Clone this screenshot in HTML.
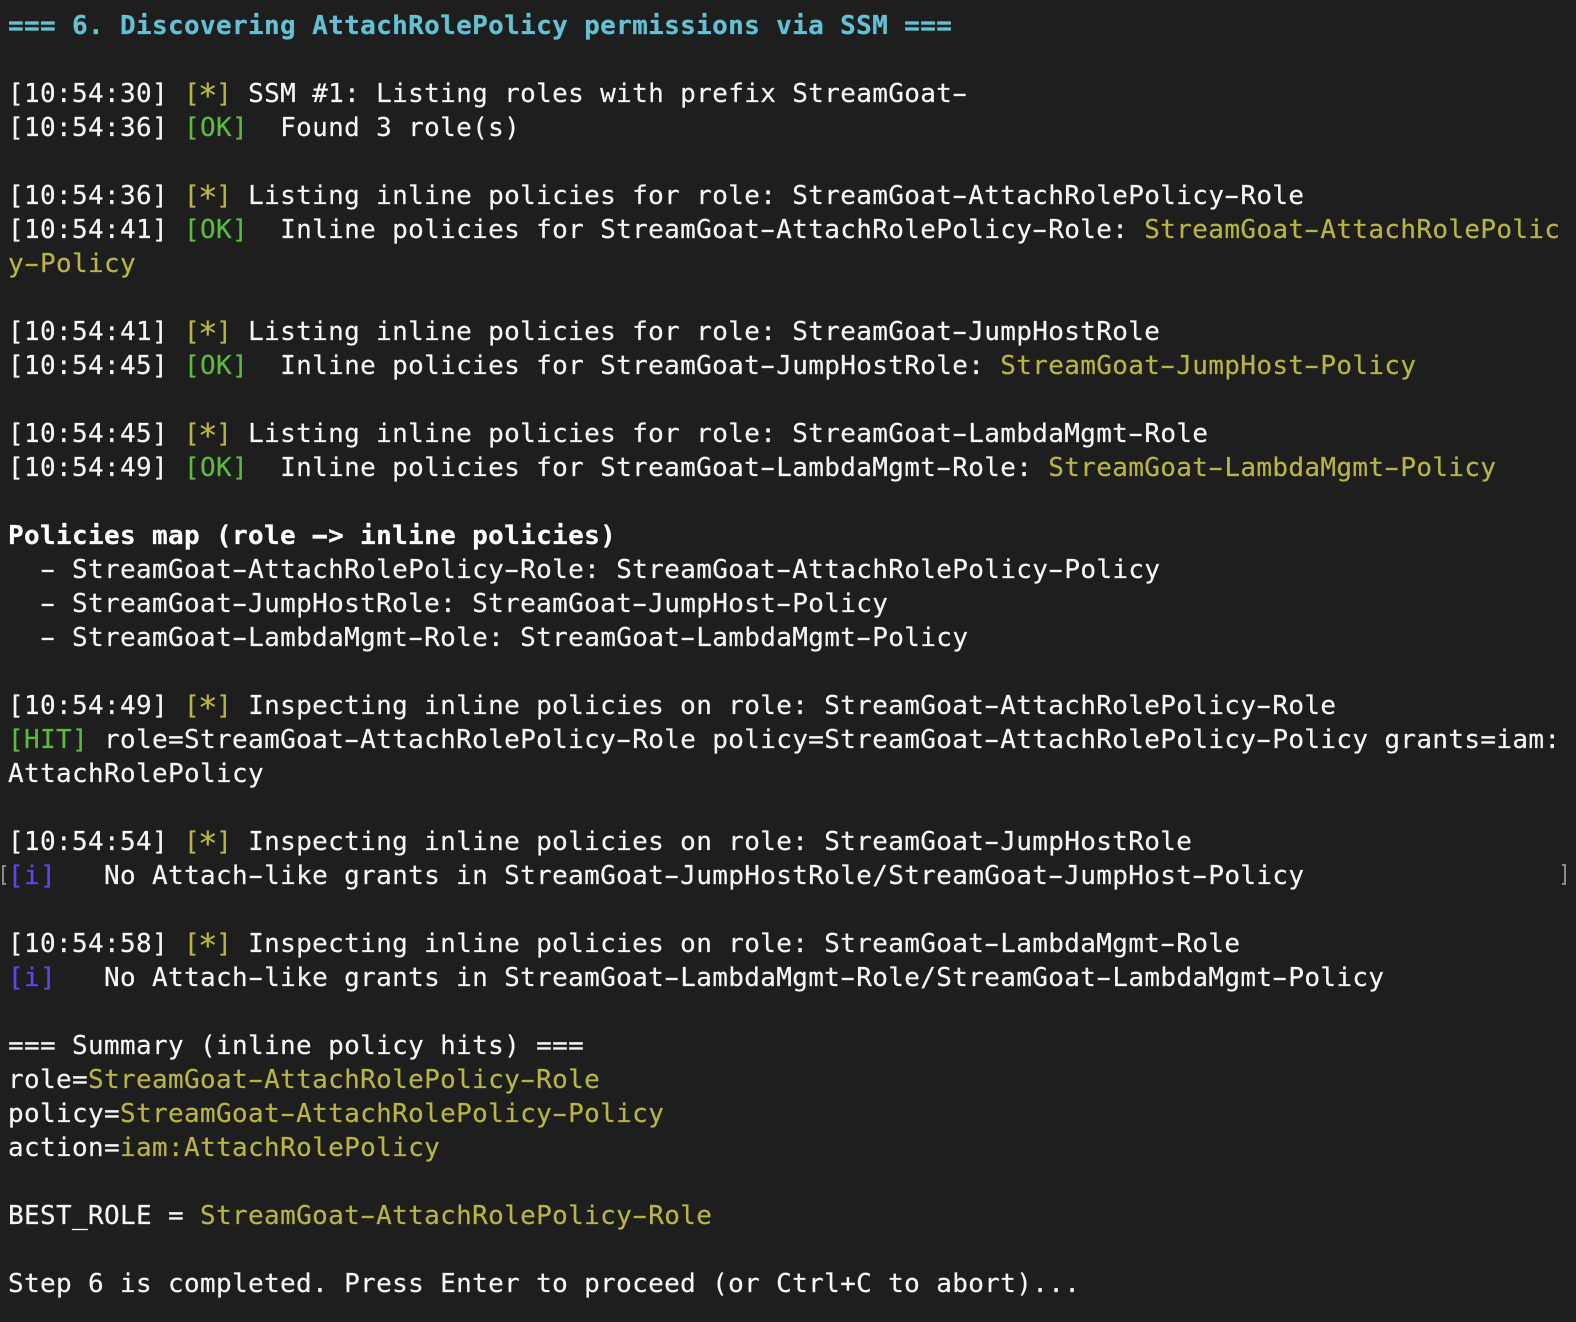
<!DOCTYPE html>
<html>
<head>
<meta charset="utf-8">
<style>
html,body{margin:0;padding:0;background:#1e1e1e;}
body{width:1576px;height:1322px;overflow:hidden;position:relative;}
pre{position:absolute;left:8px;top:9px;margin:0;font-family:"DejaVu Sans Mono","Liberation Mono",monospace;font-size:26px;line-height:34px;letter-spacing:0.35px;color:#f6f6f6;white-space:pre;-webkit-text-stroke:0.2px currentColor;}
.c{color:#64c1d4;font-weight:bold}
.y{color:#b8b545}
.g{color:#5cbb3e}
.b{color:#5c48ea}
.w{color:#fff;font-weight:bold}
i{font-style:normal;display:inline-block;transform:scaleX(1.75);}
b{font-weight:normal;display:inline-block;transform:translateY(3px) scale(1.25);}
.br{position:absolute;width:2px;background:#8a8a8a;}
.br:before,.br:after{content:"";position:absolute;width:4px;height:2px;background:#8a8a8a;}
.br:before{top:0}.br:after{bottom:0}
.l:before,.l:after{left:0}
.r:before,.r:after{right:0}
</style>
</head>
<body>
<pre><span class="c">=== 6. Discovering AttachRolePolicy permissions via SSM ===</span>

[10:54:30] <span class="y">[<b>*</b>]</span> SSM #1: Listing roles with prefix StreamGoat<i>-</i>
[10:54:36] <span class="g">[OK]</span>  Found 3 role(s)

[10:54:36] <span class="y">[<b>*</b>]</span> Listing inline policies for role: StreamGoat<i>-</i>AttachRolePolicy<i>-</i>Role
[10:54:41] <span class="g">[OK]</span>  Inline policies for StreamGoat<i>-</i>AttachRolePolicy<i>-</i>Role: <span class="y">StreamGoat<i>-</i>AttachRolePolic</span>
<span class="y">y<i>-</i>Policy</span>

[10:54:41] <span class="y">[<b>*</b>]</span> Listing inline policies for role: StreamGoat<i>-</i>JumpHostRole
[10:54:45] <span class="g">[OK]</span>  Inline policies for StreamGoat<i>-</i>JumpHostRole: <span class="y">StreamGoat<i>-</i>JumpHost<i>-</i>Policy</span>

[10:54:45] <span class="y">[<b>*</b>]</span> Listing inline policies for role: StreamGoat<i>-</i>LambdaMgmt<i>-</i>Role
[10:54:49] <span class="g">[OK]</span>  Inline policies for StreamGoat<i>-</i>LambdaMgmt<i>-</i>Role: <span class="y">StreamGoat<i>-</i>LambdaMgmt<i>-</i>Policy</span>

<span class="w">Policies map (role <i>-</i>&gt; inline policies)</span>
  <i>-</i> StreamGoat<i>-</i>AttachRolePolicy<i>-</i>Role: StreamGoat<i>-</i>AttachRolePolicy<i>-</i>Policy
  <i>-</i> StreamGoat<i>-</i>JumpHostRole: StreamGoat<i>-</i>JumpHost<i>-</i>Policy
  <i>-</i> StreamGoat<i>-</i>LambdaMgmt<i>-</i>Role: StreamGoat<i>-</i>LambdaMgmt<i>-</i>Policy

[10:54:49] <span class="y">[<b>*</b>]</span> Inspecting inline policies on role: StreamGoat<i>-</i>AttachRolePolicy<i>-</i>Role
<span class="g">[HIT]</span> role=StreamGoat<i>-</i>AttachRolePolicy<i>-</i>Role policy=StreamGoat<i>-</i>AttachRolePolicy<i>-</i>Policy grants=iam:
AttachRolePolicy

[10:54:54] <span class="y">[<b>*</b>]</span> Inspecting inline policies on role: StreamGoat<i>-</i>JumpHostRole
<span class="b">[i]</span>   No Attach<i>-</i>like grants in StreamGoat<i>-</i>JumpHostRole/StreamGoat<i>-</i>JumpHost<i>-</i>Policy

[10:54:58] <span class="y">[<b>*</b>]</span> Inspecting inline policies on role: StreamGoat<i>-</i>LambdaMgmt<i>-</i>Role
<span class="b">[i]</span>   No Attach<i>-</i>like grants in StreamGoat<i>-</i>LambdaMgmt<i>-</i>Role/StreamGoat<i>-</i>LambdaMgmt<i>-</i>Policy

=== Summary (inline policy hits) ===
role=<span class="y">StreamGoat<i>-</i>AttachRolePolicy<i>-</i>Role</span>
policy=<span class="y">StreamGoat<i>-</i>AttachRolePolicy<i>-</i>Policy</span>
action=<span class="y">iam:AttachRolePolicy</span>

BEST_ROLE = <span class="y">StreamGoat<i>-</i>AttachRolePolicy<i>-</i>Role</span>

Step 6 is completed. Press Enter to proceed (or Ctrl+C to abort)...</pre>
<div class="br l" style="left:2px;top:865px;height:20px"></div>
<div class="br r" style="left:1564px;top:864px;height:21px"></div>
</body>
</html>
